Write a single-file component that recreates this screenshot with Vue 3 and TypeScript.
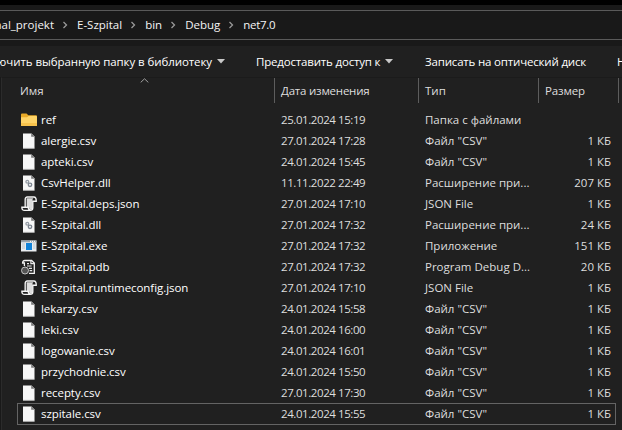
<script setup lang="ts">
type Kind = 'folder' | 'file' | 'dll' | 'json' | 'exe' | 'pdb'

interface Entry {
  name: string
  date: string
  type: string
  size: string
  kind: Kind
}

const csv = 'Файл "CSV"'
const entries: Entry[] = [
  { name: 'ref', date: '25.01.2024 15:19', type: 'Папка с файлами', size: '', kind: 'folder' },
  { name: 'alergie.csv', date: '27.01.2024 17:28', type: csv, size: '1 КБ', kind: 'file' },
  { name: 'apteki.csv', date: '24.01.2024 15:45', type: csv, size: '1 КБ', kind: 'file' },
  { name: 'CsvHelper.dll', date: '11.11.2022 22:49', type: 'Расширение при...', size: '207 КБ', kind: 'dll' },
  { name: 'E-Szpital.deps.json', date: '27.01.2024 17:10', type: 'JSON File', size: '1 КБ', kind: 'json' },
  { name: 'E-Szpital.dll', date: '27.01.2024 17:32', type: 'Расширение при...', size: '24 КБ', kind: 'dll' },
  { name: 'E-Szpital.exe', date: '27.01.2024 17:32', type: 'Приложение', size: '151 КБ', kind: 'exe' },
  { name: 'E-Szpital.pdb', date: '27.01.2024 17:32', type: 'Program Debug D...', size: '20 КБ', kind: 'pdb' },
  { name: 'E-Szpital.runtimeconfig.json', date: '27.01.2024 17:10', type: 'JSON File', size: '1 КБ', kind: 'json' },
  { name: 'lekarzy.csv', date: '24.01.2024 15:58', type: csv, size: '1 КБ', kind: 'file' },
  { name: 'leki.csv', date: '24.01.2024 16:00', type: csv, size: '1 КБ', kind: 'file' },
  { name: 'logowanie.csv', date: '24.01.2024 16:01', type: csv, size: '1 КБ', kind: 'file' },
  { name: 'przychodnie.csv', date: '24.01.2024 15:50', type: csv, size: '1 КБ', kind: 'file' },
  { name: 'recepty.csv', date: '27.01.2024 17:30', type: csv, size: '1 КБ', kind: 'file' },
  { name: 'szpitale.csv', date: '24.01.2024 15:55', type: csv, size: '1 КБ', kind: 'file' },
]
const crumbs = ['E-Szpital', 'bin', 'Debug', 'net7.0']
const focused = 'szpitale.csv'
</script>

<template>
  <div class="window">
    <nav class="address">
      <span class="crumb first">nal_projekt</span>
      <template v-for="c in crumbs" :key="c">
        <svg class="chevron" width="23" height="8" viewBox="0 0 23 8"><path d="M9.5 1l3 3-3 3" /></svg>
        <span class="crumb">{{ c }}</span>
      </template>
    </nav>

    <div class="commands">
      <div class="command library">
        <span>ючить выбранную папку в библиотеку</span>
        <svg width="8" height="5" viewBox="0 0 8 5"><path d="M0 0h8L4 4.6z" /></svg>
      </div>
      <div class="command share">
        <span>Предоставить доступ к</span>
        <svg width="8" height="5" viewBox="0 0 8 5"><path d="M0 0h8L4 4.6z" /></svg>
      </div>
      <div class="command burn"><span>Записать на оптический диск</span></div>
      <div class="command"><span>Н</span></div>
    </div>

    <main class="content">
      <header class="columns">
        <div class="col name">
          <span>Имя</span>
          <svg class="sort" width="9" height="5" viewBox="0 0 9 5"><path d="M.7 4.4L4.5.8l3.8 3.6" /></svg>
        </div>
        <div class="col date">Дата изменения</div>
        <div class="col type">Тип</div>
        <div class="col size">Размер</div>
      </header>

      <div class="rows">
        <div v-for="e in entries" :key="e.name" class="row" :class="{ focused: e.name === focused }">
          <svg class="icon" width="16" height="16" viewBox="0 0 16 16">
            <template v-if="e.kind === 'folder'">
              <path d="M0 2.5Q0 1.5 1 1.5h4.5l1.8 1.8H15q1 0 1 1V13q0 1-1 1H1q-1 0-1-1z" fill="#e9aa28" />
              <path d="M0 5.2h6l1.6-1.3H15q1 0 1 1V13q0 1-1 1H1q-1 0-1-1z" fill="#ffd467" />
              <path d="M0 11h16v2q0 1-1 1H1q-1 0-1-1z" fill="#f8c34c" />
            </template>
            <template v-else-if="e.kind === 'file' || e.kind === 'dll'">
              <path d="M2 .5h8.5l3 3v12H2z" fill="#f7f7f7" />
              <path d="M10.2.5v3.3h3.3z" fill="#777" />
              <path d="M2 15.2h11.5" stroke="#c9c9c9" stroke-width=".6" />
              <g v-if="e.kind === 'dll'" fill="none">
                <circle cx="6.3" cy="6.7" r="1.4" stroke="#959ca5" stroke-width="1.3" />
                <circle cx="9" cy="9.8" r="1.7" stroke="#7d8590" stroke-width="1.4" />
              </g>
            </template>
            <template v-else-if="e.kind === 'json'">
              <path d="M5.6 2.2h6.8q-1 .7-1 2.2v7.2q0 2.2-1.6 2.2T8 11.2H5.6z" fill="#dcdcdc" />
              <path d="M4.2 10.6V3.5Q4.2 1 6.4 1h6.4Q15.4 1 15.2 5.2h-3.4v6.6q0 2.6-2.6 2.6H3.6Q.8 14.4.9 11.2h6.4q0 2.6 2 2.6" fill="none" stroke="#f4f4f4" stroke-width="1.4" />
              <path d="M5.4 3.8v6.6" stroke="#555" stroke-width=".7" />
            </template>
            <template v-else-if="e.kind === 'exe'">
              <path d="M0 2.5h15.5v11H0z" fill="#e9edf0" />
              <path d="M0 2.5h15.5v1.8H0z" fill="#9ba5ae" />
              <path d="M9 3.4h1M11 3.4h1M13 3.4h1" stroke="#fff" />
              <path d="M5 5h6v7H5z" fill="#1182d8" />
              <path d="M1 6h3M1 8h3M1 10h3M12 6h2.5M12 8h2.5M12 10h2.5" stroke="#b0bac1" stroke-width=".8" />
            </template>
            <template v-else>
              <path d="M3.4 7V4H1.6Q1.6 1.5 3.8 1.5h6.8L13.3 4v10.3H8" fill="none" stroke="#f2f2f2" stroke-width="1.3" />
              <path d="M9.9 1.5v3.2h3.4M6 4.6h2M6 7h4.6M8 9.3h3M8.6 11.6h2.6" fill="none" stroke="#e8e8e8" stroke-width="1.2" />
              <circle cx="4" cy="11.5" r="3.5" fill="#555" stroke="#cfcfcf" stroke-width=".9" />
            </template>
          </svg>
          <span class="filename">{{ e.name }}</span>
          <span class="filedate">{{ e.date }}</span>
          <span class="filetype">{{ e.type }}</span>
          <span class="filesize">{{ e.size }}</span>
        </div>
      </div>
    </main>
  </div>
</template>

<style>
body {
  margin: 0;
  background: #202020;
  overflow: hidden;
}
</style>

<style scoped>
.window {
  box-sizing: border-box;
  width: 622px;
  height: 430px;
  overflow: hidden;
  border-top: 5px solid #000;
  padding-top: 5px;
  background: #191919;
  color: #f4f4f4;
  font: 11.5px/20px "Open Sans", "Noto Sans", sans-serif;
  white-space: nowrap;
}
.address {
  box-sizing: border-box;
  display: flex;
  align-items: center;
  height: 30px;
  border: solid #5a5a5a;
  border-width: 1px 0;
}
.crumb.first {
  display: flex;
  justify-content: flex-end;
  width: 54px;
}
.crumb:last-child { letter-spacing: -0.3px; }
.chevron {
  fill: none;
  stroke: #999;
  stroke-width: 1.3;
}
.commands {
  box-sizing: border-box;
  display: flex;
  align-items: center;
  height: 31px;
  margin-top: 6px;
  background: #202020;
  color: #fff;
  letter-spacing: -0.18px;
}
.command {
  display: flex;
  flex: none;
  align-items: center;
  gap: 5px;
}
.command svg { fill: #c8c8c8; }
.library {
  box-sizing: border-box;
  width: 256px;
  letter-spacing: -0.08px;
}
.library span {
  display: flex;
  justify-content: flex-end;
  width: 212px;
}
.share { width: 169px; }
.burn { width: 192px; }
.content {
  height: 353px;
  box-sizing: border-box;
  margin-left: 1px;
  border-left: 1px solid #2b2b2b;
  border-top: 1px solid #1b1b1b;
  background: #202020;
}
.columns {
  display: flex;
  height: 25px;
  line-height: 26px;
  color: #dedede;
}
.col {
  box-sizing: border-box;
  border-right: 1px solid #5d5d5d;
  padding-left: 6px;
}
.name {
  display: flex;
  width: 273px;
  padding-left: 18px;
}
.sort {
  margin: 0 0 0 96px;
  fill: none;
  stroke: #a0a0a0;
}
.date {
  width: 144px;
  letter-spacing: -0.22px;
}
.type { width: 120px; }
.size {
  width: 80px;
  letter-spacing: -0.15px;
}
.rows {
  display: flex;
  flex-direction: column;
  width: 599px;
  margin: 6px 0 0 15px;
}
.row {
  box-sizing: border-box;
  display: flex;
  align-items: center;
  height: 21px;
  padding: 0 5px 0 4px;
  color: #dedede;
}
.focused {
  height: 22px;
  border: 1px solid #646464;
  padding: 0 4px 0 3px;
}
.icon { flex: none; }
.filename {
  width: 240px;
  padding-left: 4px;
  color: #fff;
  letter-spacing: -0.06px;
}
.filedate {
  width: 144px;
  letter-spacing: -0.42px;
}
.filetype { width: 120px; }
.filesize {
  flex: 1;
  text-align: right;
}
</style>
